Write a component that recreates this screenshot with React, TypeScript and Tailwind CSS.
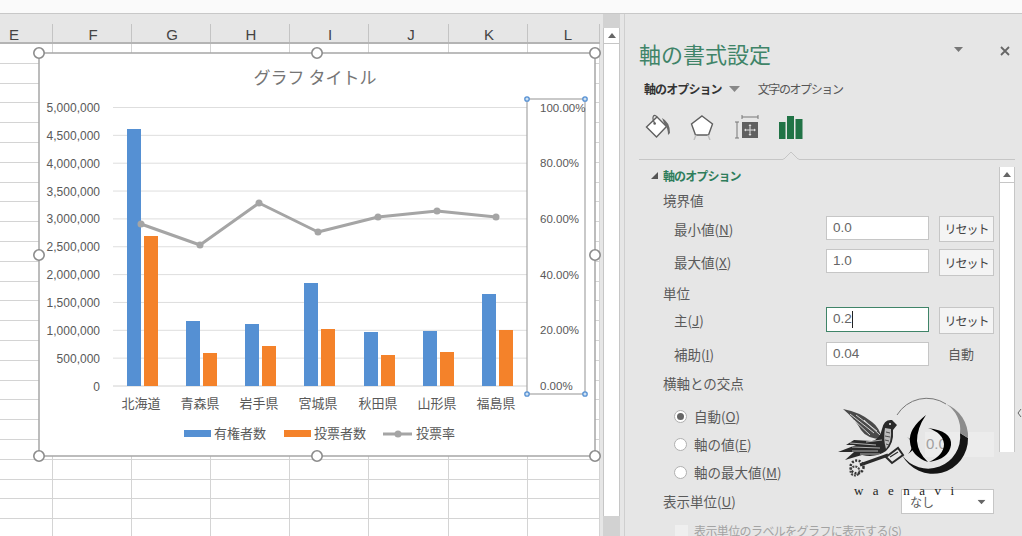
const JP = { fontFamily: '"Noto Sans CJK JP", sans-serif' };

const columns = [
  { label: "E", width: "w-[53px]", place: "pr-[25px]" },
  { label: "F", width: "w-[79px]", place: "pl-[1px]" },
  { label: "G", width: "w-[79px]", place: "pl-[1px]" },
  { label: "H", width: "w-[79px]", place: "pl-[1px]" },
  { label: "I", width: "w-[79px]", place: "pl-[1px]" },
  { label: "J", width: "w-[80px]", place: "pl-[4px]" },
  { label: "K", width: "w-[79px]", place: "pl-[1px]" },
  { label: "L", width: "w-[72px]", place: "pl-[8px]" },
];

const categories = [
  { name: "北海道", x: 141, blue: 129, orange: 236, line: 224 },
  { name: "青森県", x: 200, blue: 321, orange: 353, line: 245 },
  { name: "岩手県", x: 259, blue: 324, orange: 346, line: 203 },
  { name: "宮城県", x: 318, blue: 283, orange: 329, line: 232 },
  { name: "秋田県", x: 378, blue: 332, orange: 355, line: 217 },
  { name: "山形県", x: 437, blue: 331, orange: 352, line: 211 },
  { name: "福島県", x: 496, blue: 294, orange: 330, line: 217 },
];

const leftAxis = ["5,000,000", "4,500,000", "4,000,000", "3,500,000", "3,000,000", "2,500,000", "2,000,000", "1,500,000", "1,000,000", "500,000", "0"];
const rightAxis = ["100.00%", "80.00%", "60.00%", "40.00%", "20.00%", "0.00%"];

function SheetGrid() {
  return (
    <div className="flex-1 overflow-hidden bg-white">
      {Array.from({ length: 25 }).map((_, r) => (
        <div key={r} className="flex h-[19.8px] border-b border-[#d4d4d4]">
          {columns.map((c) => (
            <div key={c.label} className={`${c.width} shrink-0 border-r border-[#d4d4d4]`} />
          ))}
        </div>
      ))}
    </div>
  );
}

function Chart() {
  const handles = [[39, 53], [317, 53], [595, 53], [39, 255], [595, 255], [39, 456], [317, 456], [595, 456]];
  const blueHandles = [[527, 99], [585, 99], [527, 394], [585, 394]];
  const linePoints = categories.map((c) => `${c.x},${c.line}`).join(" ");
  return (
    <svg className="absolute left-0 top-0" width="610" height="470" viewBox="0 0 610 470" style={JP}>
      <rect x="39" y="53" width="556" height="403" fill="#fff" stroke="#a6a6a6" strokeWidth="1.5" />
      <text x="315" y="84" textAnchor="middle" fontSize="17" fill="#757575">グラフ タイトル</text>

      {leftAxis.map((label, i) => {
        const y = 107.5 + i * 27.85;
        return (
          <g key={label}>
            <line x1="113" x2="527" y1={y} y2={y} stroke={i === 10 ? "#d0d0d0" : "#dedede"} />
            <text x="100" y={y + 4.5} textAnchor="end" fontSize="12" fill="#595959" fontFamily="Liberation Sans">{label}</text>
          </g>
        );
      })}

      {categories.map((c) => (
        <g key={c.name}>
          <rect x={c.x - 14} y={c.blue} width="14" height={386 - c.blue} fill="#5590d3" />
          <rect x={c.x + 3} y={c.orange} width="14" height={386 - c.orange} fill="#f4822a" />
          <text x={c.x} y="408" textAnchor="middle" fontSize="13" fill="#595959">{c.name}</text>
        </g>
      ))}

      <polyline points={linePoints} fill="none" stroke="#a5a5a5" strokeWidth="3" strokeLinejoin="round" />
      {categories.map((c) => (
        <circle key={c.name} cx={c.x} cy={c.line} r="3.5" fill="#a5a5a5" />
      ))}

      <rect x="527" y="99" width="58" height="295" fill="none" stroke="#a6a6a6" strokeWidth="1.2" />
      {rightAxis.map((label, i) => (
        <text key={label} x="540" y={111.5 + i * 55.7} fontSize="11.5" fill="#595959" fontFamily="Liberation Sans">{label}</text>
      ))}
      {blueHandles.map(([x, y]) => (
        <circle key={`${x}-${y}`} cx={x} cy={y} r="2.2" fill="#cfe2f3" stroke="#5590d3" strokeWidth="1.3" />
      ))}

      <rect x="184" y="430" width="27" height="7" fill="#5590d3" />
      <text x="214" y="438" fontSize="13" fill="#595959">有権者数</text>
      <rect x="284" y="430" width="27" height="7" fill="#f4822a" />
      <text x="314" y="438" fontSize="13" fill="#595959">投票者数</text>
      <line x1="383" x2="412" y1="434" y2="434" stroke="#a5a5a5" strokeWidth="3" />
      <circle cx="398" cy="434" r="3.5" fill="#a5a5a5" />
      <text x="416" y="438" fontSize="13" fill="#595959">投票率</text>

      {handles.map(([x, y]) => (
        <circle key={`${x}-${y}`} cx={x} cy={y} r="5.2" fill="#fff" stroke="#8c8c8c" strokeWidth="1.6" />
      ))}
    </svg>
  );
}

function Triangle({ className }: { className: string }) {
  return (
    <svg className={className} width="11" height="6" viewBox="0 0 11 6">
      <path d="M0 0H11L5.5 6Z" fill="currentColor" />
    </svg>
  );
}

function FormatIcons() {
  return (
    <div className="mt-[14px] ml-[20px] flex h-[28px] items-center">
      <svg width="26" height="26" viewBox="0 0 26 26">
        <path d="M1.5 13 L12 3 L21.5 12.5 L11.5 23 Z" fill="#fff" stroke="#5f5f5f" strokeWidth="1.4" />
        <path d="M12 3 Q10 0.5 8.5 2 Q7 4 9.5 9" fill="none" stroke="#5f5f5f" strokeWidth="1.2" />
        <circle cx="9.7" cy="9.5" r="1.3" fill="#5f5f5f" />
        <path d="M17 4 Q25 8 25 19 L23 21 Q23 14 20 11.5 Z" fill="#6a6a6a" />
      </svg>
      <svg className="ml-[19px]" width="24" height="26" viewBox="0 0 24 26">
        <path d="M12 2 L22.5 10 L18.5 21 H5.5 L1.5 10 Z" fill="#fff" stroke="#5f5f5f" strokeWidth="1.4" />
        <path d="M6 21 L4 26 M18 21 L20 26" stroke="#bdbdbd" strokeWidth="1.4" />
      </svg>
      <svg className="ml-[20px]" width="25" height="26" viewBox="0 0 25 26">
        <path d="M8 1 V5 M24 1 V5 M8 3 H24" stroke="#777" strokeWidth="1" fill="none" />
        <rect x="8" y="8" width="16" height="16" fill="#606060" />
        <path d="M16 11 V21 M11 16 H21" stroke="#e0e0e0" strokeWidth="1" />
        <path d="M16 10 L14.5 12 H17.5Z M16 22 L14.5 20 H17.5Z M10 16 L12 14.5 V17.5Z M22 16 L20 14.5 V17.5Z" fill="#e0e0e0" />
        <path d="M1 8 H5 M3 8 V24 M1 24 H5" stroke="#777" strokeWidth="1" fill="none" />
      </svg>
      <svg className="ml-[20px]" width="24" height="24" viewBox="0 0 24 24">
        <rect x="0" y="7" width="6.5" height="17" fill="#217346" />
        <rect x="8" y="1" width="7" height="23" fill="#217346" />
        <rect x="16.5" y="4" width="7" height="20" fill="#217346" />
      </svg>
    </div>
  );
}

function Reset() {
  return (
    <div className="ml-[10px] flex h-full w-[55px] shrink-0 items-center justify-center border border-[#c6c6c6] bg-[#f4f4f4] text-[12px] tracking-[-1px] text-[#444]">
      リセット
    </div>
  );
}

function NumberBox({ value, focus }: { value: string; focus?: boolean }) {
  return (
    <div className={`flex w-[103px] shrink-0 items-center border bg-white pl-[6px] text-[13.5px] text-[#666] ${focus ? "h-[25px] border-[#3f8468]" : "h-[24px] border-[#c6c6c6]"}`} style={{ fontFamily: "Liberation Sans" }}>
      {value}
      {focus && <span className="h-[17px] w-px bg-[#222]" />}
    </div>
  );
}

function FieldRow({ label, value, focus, className }: { label: React.ReactNode; value: string; focus?: boolean; className: string }) {
  return (
    <div className={`flex items-start ${className}`}>
      <div className="flex h-full flex-1 items-center pl-[11px] text-[13.5px] text-[#5a5a5a]">{label}</div>
      <NumberBox value={value} focus={focus} />
      <Reset />
    </div>
  );
}

function Heading({ children, className }: { children: React.ReactNode; className: string }) {
  return <div className={`flex h-[20px] items-center text-[13.5px] text-[#5a5a5a] ${className}`}>{children}</div>;
}

function Radio({ label, on, className, children }: { label: React.ReactNode; on?: boolean; className: string; children?: React.ReactNode }) {
  return (
    <div className={`flex items-center pl-[11px] text-[13.5px] text-[#5a5a5a] ${className}`}>
      <span className="flex h-[13px] w-[13px] items-center justify-center rounded-full border border-[#b0b0b0] bg-white">
        {on && <span className="h-[7px] w-[7px] rounded-full bg-[#666]" />}
      </span>
      <span className="ml-[7px]">{label}</span>
      {children}
    </div>
  );
}

function Accel({ head, k }: { head: string; k: string }) {
  return (
    <>
      {head}(<span className="underline">{k}</span>)
    </>
  );
}

function Panel() {
  return (
    <div className="relative h-full flex-1 overflow-hidden border-l border-[#cfcfcf] bg-[#e6e6e6]" style={JP}>
      <div className="mt-[24px] ml-[14px] flex h-[30px] items-start">
        <span className="mt-[4px] text-[22px] leading-none text-[#3f8468]">軸の書式設定</span>
        <svg className="ml-[183px] mt-[9px] text-[#777]" width="9" height="5" viewBox="0 0 9 5">
          <path d="M0 0H9L4.5 5Z" fill="currentColor" />
        </svg>
        <svg className="ml-[37px] mt-[8px]" width="10" height="10" viewBox="0 0 10 10">
          <path d="M1 1L9 9M9 1L1 9" stroke="#666" strokeWidth="1.8" />
        </svg>
      </div>

      <div className="mt-[11px] ml-[19px] flex h-[20px] items-center text-[12px]">
        <span className="font-bold tracking-[-0.9px] text-[#333]">軸のオプション</span>
        <Triangle className="ml-[7px] text-[#888]" />
        <span className="ml-[18px] tracking-[-1.4px] text-[#555]">文字のオプション</span>
      </div>

      <FormatIcons />

      <div className="relative mt-[18px] ml-[14px] mr-[7px] h-px bg-[#c6c6c6]">
        <svg className="absolute left-[144px] top-[-8px]" width="16" height="9" viewBox="0 0 16 9">
          <path d="M0 8 H1 L8 1 L15 8 H16 V9 H0 Z" fill="#e6e6e6" />
          <path d="M0 8 H1 L8 1 L15 8 H16" fill="none" stroke="#c6c6c6" />
        </svg>
      </div>

      <div className="flex">
        <div className="w-[374px] shrink-0 pl-[38px] pr-[5px]">
          <div className="relative mt-[6px] flex h-[20px] items-center text-[12px] font-bold tracking-[-0.9px] text-[#2e7d5b]">
            <svg className="absolute left-[-12px] top-[6px]" width="7" height="7" viewBox="0 0 7 7">
              <path d="M7 0V7H0Z" fill="#555" />
            </svg>
            軸のオプション
          </div>
          <Heading className="mt-[4px]">境界値</Heading>
          <FieldRow className="mt-[6px] h-[26px]" label={<Accel head="最小値" k="N" />} value="0.0" />
          <FieldRow className="mt-[7px] h-[27px]" label={<Accel head="最大値" k="X" />} value="1.0" />
          <Heading className="mt-[7px]">単位</Heading>
          <FieldRow className="mt-[4px] h-[27px]" label={<Accel head="主" k="J" />} value="0.2" focus />
          <div className="mt-[8px] flex h-[24px] items-center">
            <div className="flex-1 pl-[11px] text-[13.5px] text-[#5a5a5a]">
              <Accel head="補助" k="I" />
            </div>
            <NumberBox value="0.04" />
            <div className="ml-[19px] w-[46px] text-[13px] text-[#5a5a5a]">自動</div>
          </div>
          <Heading className="mt-[7px]">横軸との交点</Heading>
          <Radio className="mt-[13px] h-[20px]" on label={<Accel head="自動" k="O" />} />
          <Radio className="mt-[6px] h-[25px]" label={<Accel head="軸の値" k="E" />}>
            <div className="ml-auto flex h-full w-[69px] items-center bg-[#ececec] pl-[1px] text-[15px] text-[#a0a0a0]" style={{ fontFamily: "Liberation Sans" }}>0.0</div>
          </Radio>
          <Radio className="mt-[5px] h-[20px]" label={<Accel head="軸の最大値" k="M" />} />
          <div className="mt-[7px] flex h-[25px] items-center text-[13.5px] text-[#5a5a5a]">
            <span className="flex-1"><Accel head="表示単位" k="U" /></span>
            <div className="flex h-full w-[93px] items-center border border-[#c6c6c6] bg-white pl-[8px] pr-[6px] text-[12px]">
              <span className="flex-1">なし</span>
              <Triangle className="scale-75 text-[#666]" />
            </div>
          </div>
          <div className="mt-[7px] flex h-[20px] items-center pl-[12px] text-[12px] tracking-[-0.6px] whitespace-nowrap text-[#a3a3a3]">
            <span className="h-[13px] w-[13px] shrink-0 bg-[#efefef]" />
            <span className="ml-[6px]">表示単位のラベルをグラフに表示する(S)</span>
          </div>
        </div>

        <div className="mt-[7px] flex h-[285px] w-[16px] shrink-0 flex-col border-x border-[#c6c6c6] bg-white">
          <div className="flex h-[16px] items-center justify-center border-b border-[#c6c6c6]">
            <svg width="8" height="5" viewBox="0 0 8 5"><path d="M0 5L4 0L8 5Z" fill="#666" /></svg>
          </div>
        </div>
      </div>

      <svg className="absolute right-[0px] top-[394px]" width="5" height="10" viewBox="0 0 5 10">
        <path d="M4 1L1 5L4 9" fill="none" stroke="#666" />
      </svg>
    </div>
  );
}

function Logo() {
  return (
    <svg className="absolute left-[830px] top-[395px]" width="140" height="105" viewBox="0 0 140 105">
      {/* bird */}
      <path d="M13 14 Q30 17 42 27 Q50 33 52 44 Q37 44 31 35 Q25 24 13 14Z" fill="#4a4a4a" />
      <path d="M20 19 L44 38 M26 20 L47 36 M24 25 L40 40 M34 25 L50 40" stroke="#e0e0e0" strokeWidth="0.9" />
      <path d="M67 30 L62 25 Q54 24 52 34 Q50 44 42 46 L24 45 L16 50 L26 50 L8 57 L24 57 L15 65 L32 60 Q46 63 56 56 Q64 49 63 35 Z" fill="#2a2a2a" />
      <path d="M20 48 L46 50 M22 52 L50 53 M22 56 L48 56 M30 59 L50 59 M36 47 L52 45" stroke="#d2d2d2" strokeWidth="0.8" />
      <path d="M55 33 Q53 44 56 54 Q62 47 61 34 Z" fill="#bdbdbd" />
      <path d="M56 37 L60 38 M55 41 L60 42 M55 45 L59 46 M56 49 L59 50" stroke="#333" strokeWidth="0.8" />
      <circle cx="60" cy="29" r="1" fill="#eee" />
      {/* key */}
      <path d="M30 70 L58 60" stroke="#2a2a2a" strokeWidth="3" />
      <path d="M56 62 L68 53 L73 60 L62 68 Z" fill="#e6e6e6" stroke="#2a2a2a" strokeWidth="2" />
      <path d="M60 62 L68 57" stroke="#2a2a2a" strokeWidth="1.2" />
      <circle cx="27" cy="72" r="6.5" fill="none" stroke="#333" strokeWidth="2.5" strokeDasharray="2 1.5" />
      <circle cx="25" cy="76" r="4.5" fill="none" stroke="#444" strokeWidth="2" strokeDasharray="2 1" />
      {/* moon */}
      <path d="M72 60 A35 35 0 0 0 138 43 L130 38 A32 32 0 0 1 72 60 Z" fill="#151515" />
      <path d="M130 38 L138 43 A35 35 0 0 0 116 9 A30 30 0 0 1 130 38 Z" fill="#8c8c8c" />
      <path d="M116 9 A35 35 0 0 0 67 20" fill="none" stroke="#777" strokeWidth="1" />
      {/* mark */}
      <path d="M77 42 Q87 49 78 59 Q91 50 77 42Z" fill="#000" />
      <path d="M96 20 Q78 34 80 47 Q81 61 98 67 Q88 58 87 46 Q87 33 96 20Z" fill="#000" />
      <path d="M98 33 Q122 36 121 50 Q119 64 99 67 Q114 60 114 49 Q113 38 98 33Z" fill="#000" />
      <text x="24" y="100" fontSize="13" textLength="100" lengthAdjust="spacing" fill="#222" fontFamily="Liberation Serif">waenavi</text>
    </svg>
  );
}

export default function App() {
  return (
    <div className="relative flex h-[536px] w-[1022px] flex-col overflow-hidden bg-[#e6e6e6]" style={{ fontFamily: '"Liberation Sans", sans-serif' }}>
      <div className="h-[14px] shrink-0 border-b border-[#c8c8c8] bg-[#fafafa]" />
      <div className="flex min-h-0 flex-1">
        <div className="flex w-[600px] shrink-0 flex-col">
          <div className="flex h-[30px] shrink-0 border-b-2 border-[#b4b4b4] bg-[#e6e6e6]">
            {columns.map((c) => (
              <div key={c.label} className={`${c.width} ${c.place} relative flex shrink-0 items-end justify-center text-[15px] leading-none text-[#444]`}>
                {c.label}
                <span className="absolute right-0 top-[10px] bottom-0 w-px bg-[#c4c4c4]" />
              </div>
            ))}
          </div>
          <SheetGrid />
        </div>
        <div className="ml-[3px] flex h-full w-[17px] shrink-0 flex-col bg-[#d2d2d2] pt-[14px]">
          <div className="flex h-[488px] flex-col border-x border-[#c6c6c6] bg-white">
            <div className="flex h-[16px] items-center justify-center border-b border-[#c6c6c6]">
              <svg width="8" height="5" viewBox="0 0 8 5"><path d="M0 5L4 0L8 5Z" fill="#666" /></svg>
            </div>
          </div>
        </div>
        <div className="w-[4px] shrink-0" />
        <Panel />
      </div>
      <Chart />
      <Logo />
    </div>
  );
}
